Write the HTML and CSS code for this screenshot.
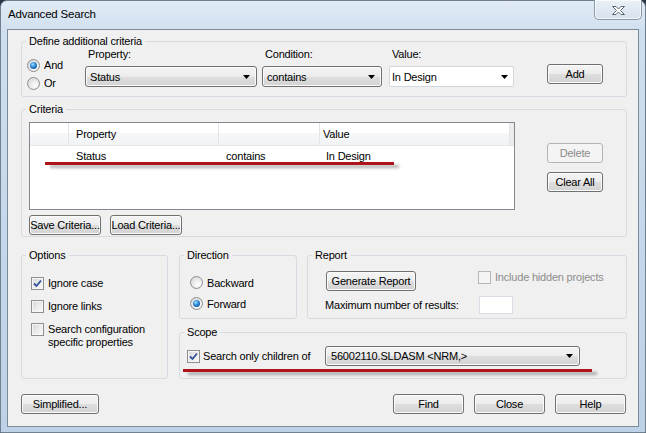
FILE: index.html
```html
<!DOCTYPE html>
<html lang="en">
<head>
    <meta charset="UTF-8">
    <meta name="viewport" content="width=device-width, initial-scale=1.0">
    <title>Advanced Search</title>
    <link rel="stylesheet" href="styles.css">
</head>
<body>
    <div class="window">
        <div class="titlebar">
            <span class="title">Advanced Search</span>
            <div class="close-btn">
                <svg width="13" height="9" viewBox="0 0 13 9"><polygon points="0.5,0.5 4,0.5 6.5,3 9,0.5 12.5,0.5 8.5,4.5 12.5,8.5 9,8.5 6.5,6 4,8.5 0.5,8.5 4.5,4.5" fill="#fff" stroke="#5b6470" stroke-width="1"/></svg>
            </div>
        </div>

        <div class="client">
            <!-- criteria builder -->
            <fieldset class="group define">
                <legend>Define additional criteria</legend>
                <div class="define-row">
                    <div class="logic">
                        <div class="opt"><span class="radio on"></span>And</div>
                        <div class="opt"><span class="radio"></span>Or</div>
                    </div>
                    <div class="field property">
                        <div class="field-label">Property:</div>
                        <div class="combo"><span>Status</span><svg class="arrow" width="7" height="4" viewBox="0 0 7 4"><polygon points="0,0 7,0 3.5,4"/></svg></div>
                    </div>
                    <div class="field condition">
                        <div class="field-label">Condition:</div>
                        <div class="combo"><span>contains</span><svg class="arrow" width="7" height="4" viewBox="0 0 7 4"><polygon points="0,0 7,0 3.5,4"/></svg></div>
                    </div>
                    <div class="field value">
                        <div class="field-label">Value:</div>
                        <div class="combo edit"><span>In Design</span><svg class="arrow" width="7" height="4" viewBox="0 0 7 4"><polygon points="0,0 7,0 3.5,4"/></svg></div>
                    </div>
                    <button class="btn add">Add</button>
                </div>
            </fieldset>

            <fieldset class="group criteria">
                <legend>Criteria</legend>
                <div class="criteria-body">
                    <div class="criteria-main">
                        <div class="listview">
                            <div class="lv-head">
                                <span></span>
                                <span class="c1">Property</span>
                                <span></span>
                                <span class="c3">Value</span>
                                <span class="fill"></span>
                            </div>
                            <div class="lv-row">
                                <span></span>
                                <span class="c1">Status</span>
                                <span class="c2">contains</span>
                                <span class="c3">In Design</span>
                            </div>
                        </div>
                        <div class="side-btns">
                            <button class="btn" disabled>Delete</button>
                            <button class="btn">Clear All</button>
                        </div>
                    </div>
                    <div class="file-btns">
                        <button class="btn">Save Criteria...</button>
                        <button class="btn">Load Criteria...</button>
                    </div>
                </div>
            </fieldset>

            <div class="lower">
                <fieldset class="group options">
                    <legend>Options</legend>
                    <div class="options-body">
                        <div class="chk-row"><span class="check on"><svg width="11" height="11" viewBox="0 0 11 11"><path d="M2 5.5 L4.5 8 L9 2.5"/></svg></span>Ignore case</div>
                        <div class="chk-row"><span class="check"></span>Ignore links</div>
                        <div class="chk-row"><span class="check"></span><span>Search configuration<br>specific properties</span></div>
                    </div>
                </fieldset>

                <div class="lower-right">
                    <div class="lower-top">
                        <fieldset class="group direction">
                            <legend>Direction</legend>
                            <div class="direction-body">
                                <div class="opt"><span class="radio"></span>Backward</div>
                                <div class="opt"><span class="radio on"></span>Forward</div>
                            </div>
                        </fieldset>
                        <fieldset class="group report">
                            <legend>Report</legend>
                            <div class="report-grid">
                                <button class="btn gen">Generate Report</button>
                                <div class="chk-row disabled"><span class="check"></span>Include hidden projects</div>
                                <span>Maximum number of results:</span>
                                <div class="textbox"></div>
                            </div>
                        </fieldset>
                    </div>
                    <fieldset class="group scope">
                        <legend>Scope</legend>
                        <div class="scope-row">
                            <div class="chk-row"><span class="check on"><svg width="11" height="11" viewBox="0 0 11 11"><path d="M2 5.5 L4.5 8 L9 2.5"/></svg></span>Search only children of</div>
                            <div class="combo"><span>56002110.SLDASM &lt;NRM,&gt;</span><svg class="arrow" width="7" height="4" viewBox="0 0 7 4"><polygon points="0,0 7,0 3.5,4"/></svg></div>
                        </div>
                    </fieldset>
                </div>
            </div>

            <div class="footer">
                <button class="btn wide">Simplified...</button>
                <div class="footer-right">
                    <button class="btn wide">Find</button>
                    <button class="btn wide">Close</button>
                    <button class="btn wide">Help</button>
                </div>
            </div>

            <!-- red highlight strokes drawn over the dialog -->
            <div class="mark mark-row"></div>
            <div class="mark mark-scope"></div>
        </div>
    </div>
</body>
</html>
```

FILE: styles.css
```css
* {
    box-sizing: border-box;
}

body {
    margin: 0;
    background-color: #2a3645;
    font-family: "Liberation Sans", Arial, sans-serif;
    font-size: 11px;
    color: #000;
}

.window {
    width: 646px;
    height: 433px;
    display: flex;
    flex-direction: column;
    border: 1px solid #6f8091;
    border-radius: 7px 7px 0 0;
    background: linear-gradient(to bottom, #e2ebf5 0%, #d0dfef 7%, #c6d8eb 50%, #bdd1e7 100%);
}

.titlebar {
    height: 28px;
    flex: none;
    display: flex;
    justify-content: space-between;
    align-items: flex-start;
    padding-left: 7px;
}

.title {
    font-size: 11.5px;
    line-height: 27px;
    letter-spacing: -0.2px;
}

.close-btn {
    width: 48px;
    height: 20px;
    margin-top: -1px;
    margin-right: 3px;
    display: flex;
    align-items: center;
    justify-content: center;
    padding-top: 2px;
    border: 1px solid #8a99a8;
    border-top: none;
    border-radius: 0 0 5px 5px;
    background: linear-gradient(to bottom, #eaf0f6, #d6e2ee);
    box-shadow: inset 0 0 0 1px rgba(255, 255, 255, 0.7);
}

.client {
    flex: 1;
    position: relative;
    display: flex;
    flex-direction: column;
    margin: 0 6px 5px 6px;
    padding: 5px 11px 0 13px;
    background-color: #f0f0f0;
    border: 1px solid #7d8b99;
    letter-spacing: -0.2px;
}

/* group boxes */
.group {
    margin: 0;
    padding: 0;
    min-width: 0;
    border: 1px solid #d5dbe0;
    border-radius: 3px;
}

.group legend {
    margin-left: 4px;
    padding: 0 3px;
    line-height: 13px;
}

/* buttons */
.btn {
    height: 20px;
    padding: 0;
    font: inherit;
    letter-spacing: inherit;
    color: #000;
    border: 1px solid #707070;
    border-radius: 3px;
    background: linear-gradient(to bottom, #f4f4f4 0%, #ececec 50%, #dedede 51%, #d2d2d2 100%);
    box-shadow: inset 0 0 0 1px #fbfbfb;
}

.btn:disabled {
    color: #8b8b8b;
    border-color: #b1b5b8;
    background: #f4f4f4;
    box-shadow: none;
}

/* combo boxes */
.combo {
    height: 21px;
    display: flex;
    align-items: center;
    justify-content: space-between;
    padding: 0 6px 0 4px;
    border: 1px solid #707070;
    border-radius: 3px;
    background: linear-gradient(to bottom, #f4f4f4 0%, #ececec 50%, #dedede 51%, #d3d3d3 100%);
    box-shadow: inset 0 0 0 1px #fbfbfb;
}

.combo.edit {
    padding-left: 2px;
    padding-right: 5px;
    border-color: #d2d7de;
    border-radius: 2px;
    background: #fff;
    box-shadow: none;
}

.arrow polygon {
    fill: #000;
}

/* radios and checks */
.opt {
    height: 18px;
    display: flex;
    align-items: center;
    gap: 4px;
}

.radio {
    position: relative;
    width: 13px;
    height: 13px;
    flex: none;
    border: 1px solid #8c8e90;
    border-radius: 50%;
    background: radial-gradient(circle at 65% 70%, #ffffff 0%, #e6e6e6 55%, #d0d0d0 100%);
}

.radio.on::after {
    content: "";
    position: absolute;
    left: 2px;
    top: 2px;
    width: 7px;
    height: 7px;
    border-radius: 50%;
    background: radial-gradient(circle at 40% 35%, #9fe0ff 0%, #2c86d6 45%, #0c3c83 100%);
}

.chk-row {
    display: flex;
    align-items: center;
    gap: 4px;
    line-height: 13px;
}

.check {
    width: 13px;
    height: 13px;
    flex: none;
    display: flex;
    align-items: center;
    justify-content: center;
    border: 1px solid #8e8f8f;
    background: linear-gradient(135deg, #d6d6d6 0%, #ececec 55%, #fbfbfb 100%);
    box-shadow: inset 0 0 0 1px #f6f6f6;
}

.check path {
    fill: none;
    stroke: #33509a;
    stroke-width: 1.8;
}

.chk-row.disabled {
    color: #8d8d8d;
}

.chk-row.disabled .check {
    border-color: #b7b7b7;
    background: #f4f4f4;
    box-shadow: none;
}

/* define additional criteria */
.define-row {
    display: flex;
    align-items: flex-start;
    padding: 0 0 4px 5px;
}

.logic {
    width: 58px;
    margin-top: 8px;
}

.field-label {
    line-height: 13px;
    padding-left: 3px;
    margin-bottom: 5px;
}

.property {
    width: 172px;
}

.condition {
    width: 120px;
    margin-left: 5px;
}

.value {
    width: 125px;
    margin-left: 7px;
}

.add {
    width: 56px;
    margin-top: 16px;
    margin-left: 33px;
}

/* criteria list */
.criteria {
    margin-top: 6px;
}

.criteria-body {
    padding: 6px 0 1px 7px;
}

.criteria-main {
    display: flex;
    align-items: flex-start;
}

.listview {
    width: 486px;
    height: 88px;
    border: 1px solid #828790;
    background-color: #fff;
}

.lv-head,
.lv-row {
    display: grid;
    grid-template-columns: 39px 150px 101px 190px 1fr;
}

.lv-head {
    height: 23px;
    line-height: 22px;
    border-bottom: 1px solid #e5e5e5;
    background: linear-gradient(to bottom, #ffffff 0%, #ffffff 45%, #f6f7f8 46%, #f2f3f5 100%);
}

.lv-head span {
    border-right: 1px solid #e3e5e8;
}

.lv-head .fill {
    border-right: none;
    background-color: #ececec;
}

.lv-row {
    height: 21px;
    line-height: 21px;
}

.c1,
.c2 {
    padding-left: 7px;
}

.lv-head .c3 {
    padding-left: 3px;
}

.lv-row .c3 {
    padding-left: 6px;
}

.side-btns {
    display: flex;
    flex-direction: column;
    gap: 9px;
    margin-left: 32px;
    margin-top: 21px;
}

.side-btns .btn {
    width: 56px;
}

.file-btns {
    display: flex;
    gap: 9px;
    margin-top: 5px;
}

.file-btns .btn {
    width: 72px;
}

/* lower groups */
.lower {
    display: flex;
    margin-top: 12px;
}

.options {
    width: 147px;
}

.options-body {
    padding: 15px 0 0 9px;
}

.options-body .chk-row {
    align-items: flex-start;
    margin-bottom: 10px;
}

.lower-right {
    flex: 1;
    margin-left: 11px;
}

.lower-top {
    display: flex;
    gap: 10px;
}

.direction {
    width: 118px;
}

.direction-body {
    padding: 10px 0 4px 10px;
}

.direction-body .opt {
    height: 21px;
}

.report {
    flex: 1;
}

.report-grid {
    display: grid;
    grid-template-columns: 153px auto;
    row-gap: 5px;
    align-items: center;
    padding: 9px 0 4px 17px;
}

.report-grid .chk-row {
    align-self: start;
}

.gen {
    width: 90px;
    margin-left: 1px;
}

.textbox {
    width: 34px;
    height: 18px;
    margin-left: 1px;
    border: 1px solid #dadee4;
    background-color: #fff;
}

.scope {
    margin-top: 7px;
}

.scope-row {
    display: flex;
    align-items: center;
    padding: 7px 0 12px 7px;
}

.scope-row .chk-row {
    width: 138px;
    gap: 3px;
}

.scope-row .combo {
    width: 255px;
    height: 20px;
    padding-left: 5px;
}

/* dialog buttons */
.footer {
    display: flex;
    justify-content: space-between;
    margin-top: 15px;
    margin-right: 1px;
}

.footer-right {
    display: flex;
    gap: 10px;
}

.footer .wide {
    width: 71px;
}

.footer > .wide {
    width: 78px;
}

/* red annotation strokes */
.mark {
    position: absolute;
    height: 3px;
    background-color: #b0121a;
    box-shadow: 5px 3px 3px rgba(60, 60, 60, 0.4);
}

.mark-row {
    left: 37px;
    top: 132px;
    width: 349px;
}

.mark-scope {
    left: 175px;
    top: 339px;
    width: 409px;
}
```
